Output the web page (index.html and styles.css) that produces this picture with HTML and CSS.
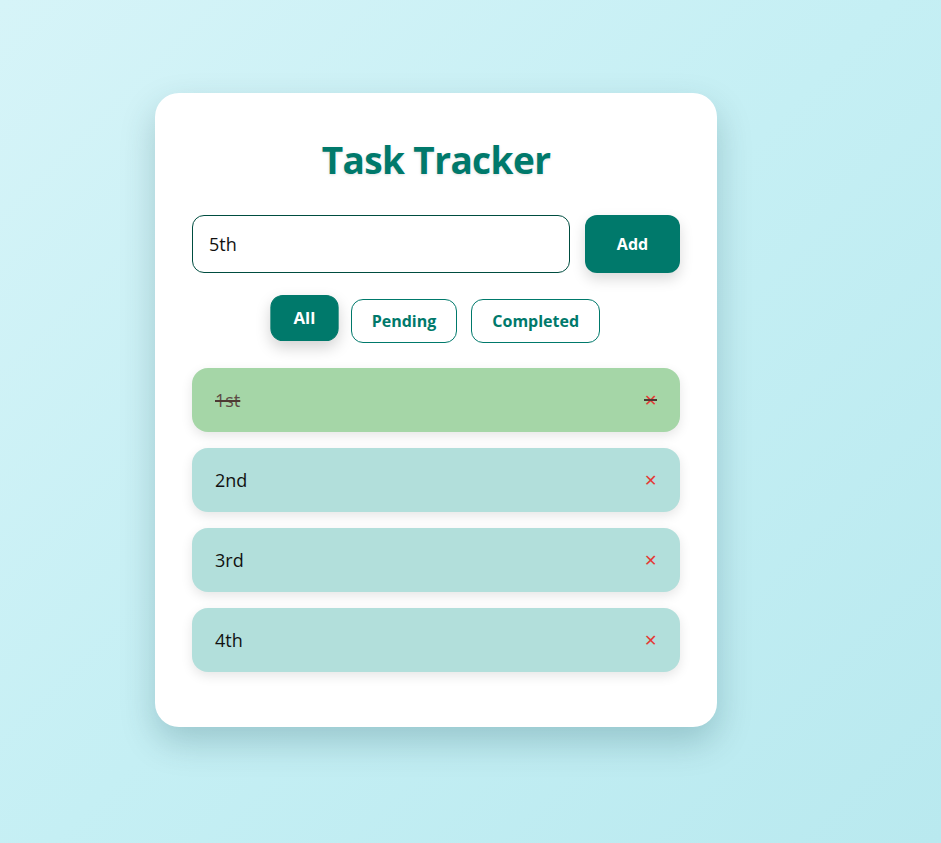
FILE: index.html
```html
<!DOCTYPE html>
<html lang="en">
<head>
<meta charset="utf-8">
<title>Task Tracker</title>
<link rel="stylesheet" href="styles.css">
</head>
<body>
<main class="card">
  <h1 class="title">Task Tracker</h1>
  <div class="add-row">
    <input class="task-input" type="text" value="5th">
    <button class="add-btn">Add</button>
  </div>
  <div class="filters">
    <button class="filter active">All</button>
    <button class="filter">Pending</button>
    <button class="filter">Completed</button>
  </div>
  <ul class="tasks">
    <li class="task done"><span class="task-text">1st</span><span class="del">✕</span></li>
    <li class="task"><span class="task-text">2nd</span><span class="del">✕</span></li>
    <li class="task"><span class="task-text">3rd</span><span class="del">✕</span></li>
    <li class="task"><span class="task-text">4th</span><span class="del">✕</span></li>
  </ul>
</main>
</body>
</html>
```
FILE: styles.css
```css
* { box-sizing: border-box; }
html, body { height: 100%; }
body {
  margin: 0;
  padding-top: 93px;
  font-family: "Open Sans", "Noto Sans", sans-serif;
  background: linear-gradient(135deg, #d6f4f8 0%, #c5eff4 50%, #b9e9ef 100%);
}
.card {
  width: 562px;
  margin-left: 155px;
  background: #fff;
  border-radius: 24px;
  padding: 37px 37px 55px;
  box-shadow: 0 15px 35px rgba(0, 60, 70, 0.22);
}
.title {
  margin: 0 0 25px;
  text-align: center;
  color: #00796b;
  font-size: 37px;
  font-weight: 700;
  line-height: 60px;
  letter-spacing: -0.6px;
  text-shadow: 0 1px 3px rgba(0,0,0,0.12);
}
.add-row {
  display: flex;
  gap: 15px;
}
.task-input {
  flex: 1;
  height: 58px;
  border: 1px solid #004d40;
  border-radius: 12px;
  padding: 0 16px;
  font-family: inherit;
  font-size: 18px;
  color: #111;
  outline: none;
}
.add-btn {
  width: 95px;
  height: 58px;
  border: none;
  border-radius: 12px;
  background: #00796b;
  color: #fff;
  font-family: inherit;
  font-weight: 700;
  font-size: 16px;
  box-shadow: 0 6px 14px rgba(0,0,0,0.15);
}
.filters {
  display: flex;
  justify-content: center;
  gap: 14px;
  margin-top: 26px;
}
.filter {
  height: 44px;
  padding: 0 20px;
  border: 1px solid #00796b;
  border-radius: 12px;
  background: #fff;
  color: #00796b;
  font-family: inherit;
  font-weight: 700;
  font-size: 16px;
}
.filter.active {
  background: #00796b;
  color: #fff;
  padding: 0 21px;
  transform: translateY(-3px) scale(1.05);
  box-shadow: 0 6px 14px rgba(0,0,0,0.18);
}
.tasks {
  list-style: none;
  margin: 25px 0 0;
  padding: 0;
  display: flex;
  flex-direction: column;
  gap: 16px;
}
.task {
  height: 64px;
  display: flex;
  align-items: center;
  justify-content: space-between;
  padding: 0 23px 0 23px;
  border-radius: 16px;
  background: #b2dfdb;
  font-size: 18px;
  color: #111;
  box-shadow: 0 4px 12px rgba(0,0,0,0.1);
}
.task.done {
  background: #a5d6a7;
  color: #5d4b45;
  text-decoration: line-through;
  text-decoration-color: #4e3a33;
  text-decoration-thickness: 2px;
}
.del {
  color: #e53935;
  font-size: 16px;
}
```
